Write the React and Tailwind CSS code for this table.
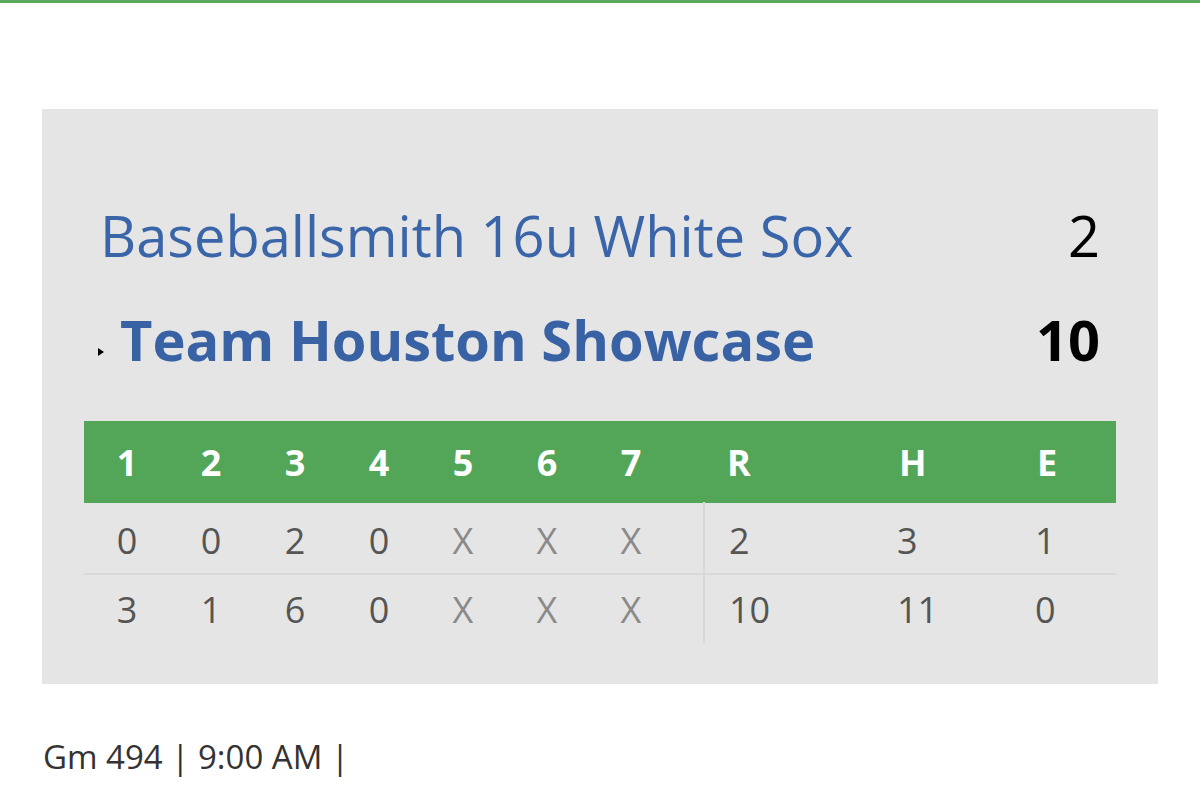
export default function App() {
  const innings = ["1", "2", "3", "4", "5", "6", "7"];
  const rows = [
    { inn: ["0", "0", "2", "0", "X", "X", "X"], r: "2", h: "3", e: "1" },
    { inn: ["3", "1", "6", "0", "X", "X", "X"], r: "10", h: "11", e: "0" },
  ];
  const font = { fontFamily: '"Open Sans", "Noto Sans", sans-serif' };
  return (
    <div className="w-[1200px] h-[803px] bg-white overflow-hidden" style={font}>
      <div className="h-[3px] bg-[#5aaa5e]" />
      <div className="pt-[106px] px-[42px]">
        <div className="bg-[#e5e5e5] h-[575px] px-[42px] pt-[91px]">
          <div className="px-[16px]">
            <div className="flex items-center justify-between h-[70px]">
              <span className="text-[56px] leading-none text-[#3a65a8]">Baseballsmith 16u White Sox</span>
              <span className="text-[56px] leading-none text-black">2</span>
            </div>
            <div className="flex items-center justify-between h-[70px] mt-[34px]">
              <span className="relative text-[56px] leading-none font-bold text-[#3962a5] pl-[20px]">
                <span className="absolute left-[-2px] top-[37px] w-0 h-0 border-y-[4px] border-y-transparent border-l-[6px] border-l-black" />
                Team Houston Showcase
              </span>
              <span className="text-[56px] leading-none font-bold text-black">10</span>
            </div>
          </div>
          <div className="mt-[47px]">
            <div className="flex h-[82px] items-center bg-[#53a657] text-white font-bold text-[36px] leading-none pt-[2px]">
              {innings.map((n) => (
                <div key={n} className="w-[84px] text-center pl-[2px]">{n}</div>
              ))}
              <div className="ml-[31px] w-[170px] pl-[24px]">R</div>
              <div className="w-[138px] pl-[26px]">H</div>
              <div className="flex-1 pl-[26px]">E</div>
            </div>
            {rows.map((row, i) => (
              <div
                key={i}
                className={`flex items-center text-[36px] leading-none text-[#555555] ${i === 0 ? "h-[72px] border-b-[2px] border-[#d9d9d9] pt-[5px]" : "h-[68px] pt-[2px]"}`}
              >
                {row.inn.map((v, j) => (
                  <div key={j} className={`w-[84px] text-center pl-[2px] ${v === "X" ? "text-[#8a8a8a]" : ""}`}>{v}</div>
                ))}
                <div className={`ml-[31px] w-[170px] pl-[24px] border-l-[2px] border-[#d9d9d9] flex items-center ${i === 0 ? "h-[72px] -mt-[5px] pt-[5px]" : "h-[68px] -mt-[2px] pt-[2px]"}`}>{row.r}</div>
                <div className="w-[138px] pl-[24px]">{row.h}</div>
                <div className="flex-1 pl-[24px]">{row.e}</div>
              </div>
            ))}
          </div>
        </div>
      </div>
      <div className="px-[43px] pt-[56px] text-[33px] leading-none text-[#333333]">Gm 494 | 9:00 AM |</div>
    </div>
  );
}
